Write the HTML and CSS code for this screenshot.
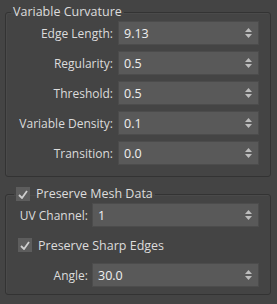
FILE: index.html
```html
<!DOCTYPE html>
<html lang="en">
<head>
    <meta charset="UTF-8">
    <title>Subdivision Settings</title>
    <link rel="stylesheet" href="styles.css">
</head>
<body>
    <div class="panel">
        <fieldset class="group">
            <legend>Variable Curvature</legend>
            <div class="rows rows-wide">
                <label>Edge Length:</label>
                <div class="spin"><span>9.13</span><svg width="7" height="10" viewBox="0 0 7 10"><polygon points="3.5,0 7,4 0,4"/><polygon points="0,6 7,6 3.5,10"/></svg></div>
                <label>Regularity:</label>
                <div class="spin"><span>0.5</span><svg width="7" height="10" viewBox="0 0 7 10"><polygon points="3.5,0 7,4 0,4"/><polygon points="0,6 7,6 3.5,10"/></svg></div>
                <label>Threshold:</label>
                <div class="spin"><span>0.5</span><svg width="7" height="10" viewBox="0 0 7 10"><polygon points="3.5,0 7,4 0,4"/><polygon points="0,6 7,6 3.5,10"/></svg></div>
                <label>Variable Density:</label>
                <div class="spin"><span>0.1</span><svg width="7" height="10" viewBox="0 0 7 10"><polygon points="3.5,0 7,4 0,4"/><polygon points="0,6 7,6 3.5,10"/></svg></div>
                <label>Transition:</label>
                <div class="spin"><span>0.0</span><svg width="7" height="10" viewBox="0 0 7 10"><polygon points="3.5,0 7,4 0,4"/><polygon points="0,6 7,6 3.5,10"/></svg></div>
            </div>
        </fieldset>

        <fieldset class="group">
            <legend class="check-legend"><span class="check"><svg width="10" height="9" viewBox="0 0 10 9"><path d="M1 5 L4 8 L9 1"/></svg></span>Preserve Mesh Data</legend>
            <div class="rows rows-narrow">
                <label>UV Channel:</label>
                <div class="spin"><span>1</span><svg width="7" height="10" viewBox="0 0 7 10"><polygon points="3.5,0 7,4 0,4"/><polygon points="0,6 7,6 3.5,10"/></svg></div>
                <div class="check-row"><span class="check"><svg width="10" height="9" viewBox="0 0 10 9"><path d="M1 5 L4 8 L9 1"/></svg></span>Preserve Sharp Edges</div>
                <label>Angle:</label>
                <div class="spin"><span>30.0</span><svg width="7" height="10" viewBox="0 0 7 10"><polygon points="3.5,0 7,4 0,4"/><polygon points="0,6 7,6 3.5,10"/></svg></div>
            </div>
        </fieldset>
    </div>
</body>
</html>
```

FILE: styles.css
```css
body {
    margin: 0;
    background: #444444;
    font-family: 'Open Sans', sans-serif;
    font-size: 12px;
    color: #dcdcdc;
}
.panel {
    padding: 4px 6px 0 5px;
}
.group {
    margin: 0 0 9px 0;
    padding: 0;
    border: 1px solid #333333;
    border-radius: 3px;
    box-shadow: inset 1px 1px 0 #4a4a4a;
}
legend {
    margin-left: 5px;
    padding: 0 2px;
    font-size: 12.5px;
    line-height: 16px;
}
.check-legend {
    display: flex;
    align-items: center;
    margin-left: 8px;
    padding: 0 2px 0 2px;
}
.check {
    display: inline-flex;
    align-items: center;
    justify-content: center;
    width: 14px;
    height: 14px;
    background: #5d5d5d;
    margin-right: 6px;
}
.check svg path {
    fill: none;
    stroke: #cfcfcf;
    stroke-width: 1.8;
}
.rows {
    display: grid;
    row-gap: 6px;
    align-items: center;
    padding: 1px 11px 11px 11px;
}
.rows-wide {
    grid-template-columns: 96px 1fr;
    column-gap: 5px;
}
.rows-narrow {
    grid-template-columns: 71px 1fr;
    column-gap: 4px;
    padding-bottom: 7px;
}
label {
    justify-self: end;
    white-space: nowrap;
    font-size: 12px;
}
.spin {
    display: flex;
    align-items: center;
    justify-content: space-between;
    height: 24px;
    box-sizing: border-box;
    padding: 0 6px 0 5px;
    background: #595959;
    border: 1px solid #4c4c4c;
    color: #f0f0f0;
    font-size: 12.5px;
}
.spin svg {
    fill: #bdbdbd;
}
.check-row {
    grid-column: 1 / 3;
    display: flex;
    align-items: center;
    height: 24px;
    margin-left: 1px;
    font-size: 12.5px;
}
```
